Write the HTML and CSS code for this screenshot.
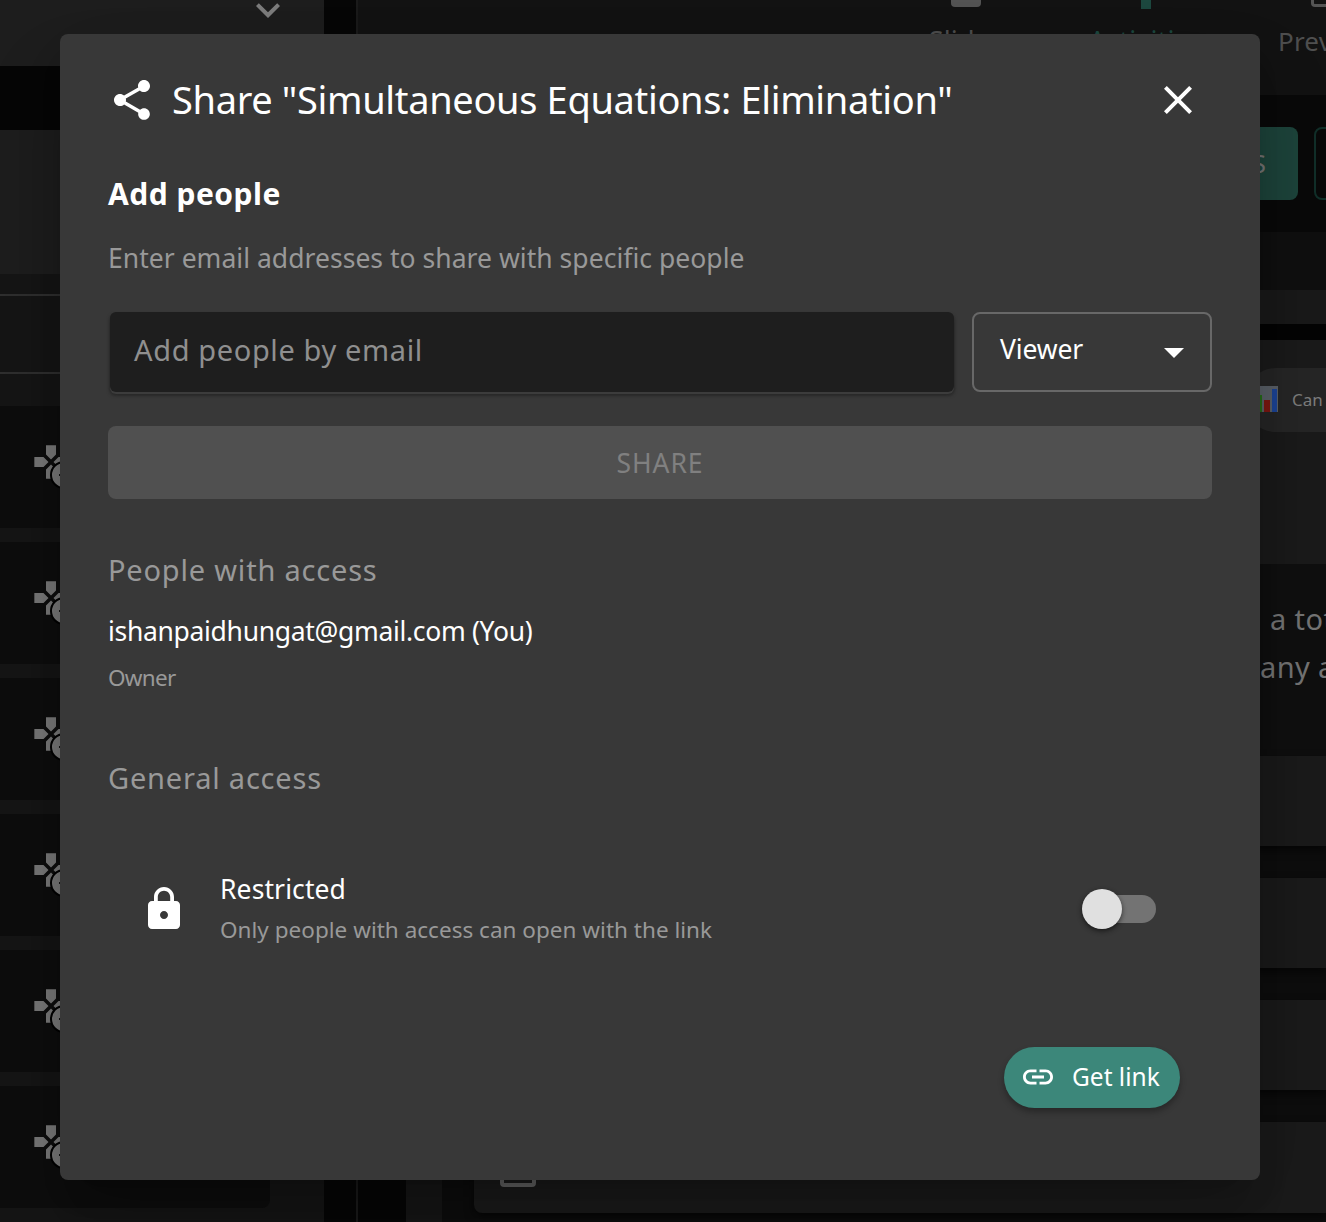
FILE: index.html
```
<!DOCTYPE html>
<html lang="en">
<head>
<meta charset="utf-8">
<title>Share</title>
<link rel="stylesheet" href="styles.css">
</head>
<body>
<svg width="0" height="0" class="defs">
  <symbol id="games" viewBox="0 0 24 24"><path d="M15 7.5V2H9v5.5l3 3 3-3zM7.5 9H2v6h5.5l3-3-3-3zM9 16.5V22h6v-5.5l-3-3-3 3zM16.5 9l-3 3 3 3H22V9h-5.5z"/></symbol>
</svg>
<div class="app">
  <aside class="side">
    <div class="side-head"><svg class="chevron" viewBox="0 0 24 24"><path d="M16.59 8.59 12 13.17 7.41 8.59 6 10l6 6 6-6z"/></svg></div>
    <div class="side-gap"></div>
    <div class="side-block"></div>
    <div class="side-search"></div>
    <div class="side-list">
      <div class="item"><svg class="game"><use href="#games"/></svg><i class="badge"></i></div>
      <div class="item"><svg class="game"><use href="#games"/></svg><i class="badge"></i></div>
      <div class="item"><svg class="game"><use href="#games"/></svg><i class="badge"></i></div>
      <div class="item"><svg class="game"><use href="#games"/></svg><i class="badge"></i></div>
      <div class="item"><svg class="game"><use href="#games"/></svg><i class="badge"></i></div>
      <div class="item"><svg class="game"><use href="#games"/></svg><i class="badge"></i></div>
    </div>
  </aside>
  <main class="main">
    <nav class="tabs">
      <div class="tab"><i class="tab-icon solid"></i><span>Slides</span></div>
      <div class="tab active"><i class="tab-icon stem"></i><span>Activities</span></div>
      <div class="tab preview"><i class="tab-icon frame"></i><span>Preview</span></div>
    </nav>
    <div class="actions"><div class="btn filled">ACTIVITIES</div><div class="btn outlined"></div></div>
    <div class="content">
      <div class="rail"></div>
      <div class="sheet">
        <div class="band band-a"></div>
        <div class="band band-b"></div>
        <div class="band band-c"></div>
        <div class="chips"><div class="chip">
          <svg class="chart" viewBox="0 0 26 26"><path fill="#5d636b" d="M0 0h26v26H0z"/><path fill="#276f18" d="M2 9h8v17H2z"/><path fill="#801813" d="M12 14h6v12h-6z"/><path fill="#1d4699" d="M20 3h5v23h-5z"/></svg>
          <span>Can you</span></div></div>
        <div class="question"><p>a total</p><p class="second">any are</p></div>
        <div class="answers">
          <div class="answer"></div>
          <div class="answer"></div>
          <div class="answer"></div>
          <div class="answer last"><i class="check"></i></div>
        </div>
      </div>
    </div>
  </main>
</div>

<div class="overlay">
  <section class="dialog">
    <header class="title-row">
      <svg class="icon" viewBox="0 0 24 24"><path d="M18 16.08c-.76 0-1.44.3-1.96.77L8.91 12.7c.05-.23.09-.46.09-.7s-.04-.47-.09-.7l7.05-4.11c.54.5 1.25.81 2.04.81 1.66 0 3-1.34 3-3s-1.34-3-3-3-3 1.34-3 3c0 .24.04.47.09.7L8.04 9.81C7.5 9.31 6.79 9 6 9c-1.66 0-3 1.34-3 3s1.34 3 3 3c.79 0 1.5-.31 2.04-.81l7.12 4.16c-.05.21-.08.43-.08.65 0 1.61 1.31 2.92 2.92 2.92s2.92-1.31 2.92-2.92-1.31-2.92-2.92-2.92"/></svg>
      <h1>Share "Simultaneous Equations: Elimination"</h1>
      <svg class="icon close" viewBox="0 0 24 24"><path d="M19 6.41 17.59 5 12 10.59 6.41 5 5 6.41 10.59 12 5 17.59 6.41 19 12 13.41 17.59 19 19 17.59 13.41 12z"/></svg>
    </header>
    <h2>Add people</h2>
    <p class="hint">Enter email addresses to share with specific people</p>
    <div class="invite">
      <div class="field"><span>Add people by email</span></div>
      <div class="select"><span>Viewer</span><svg class="icon" viewBox="0 0 24 24"><path d="m7 10 5 5 5-5z"/></svg></div>
    </div>
    <div class="share"><span>SHARE</span></div>
    <h3 class="people">People with access</h3>
    <p class="email"><span>ishanpaidhungat@gmail.com (You)</span></p>
    <p class="owner"><span>Owner</span></p>
    <h3 class="general">General access</h3>
    <div class="access">
      <svg class="icon" viewBox="0 0 24 24"><path d="M18 8h-1V6c0-2.76-2.24-5-5-5S7 3.24 7 6v2H6c-1.100 0-2 .9-2 2v10c0 1.100.9 2 2 2h12c1.100 0 2-.9 2-2V10c0-1.100-.9-2-2-2m-6 9c-1.100 0-2-.9-2-2s.9-2 2-2 2 .9 2 2-.9 2-2 2m3.100-9H8.900V6c0-1.710 1.390-3.100 3.100-3.100s3.100 1.390 3.100 3.100z"/></svg>
      <div class="access-text"><p class="restricted">Restricted</p><p class="only">Only people with access can open with the link</p></div>
      <div class="switch"><i class="thumb"></i></div>
    </div>
    <div class="foot">
      <div class="get-link"><svg viewBox="0 0 24 24"><path d="M3.900 12c0-1.710 1.390-3.100 3.100-3.100h4V7H7c-2.760 0-5 2.240-5 5s2.240 5 5 5h4v-1.900H7c-1.710 0-3.100-1.390-3.100-3.100M8 13h8v-2H8zm9-6h-4v1.900h4c1.710 0 3.100 1.390 3.100 3.100s-1.390 3.100-3.100 3.100h-4V17h4c2.760 0 5-2.240 5-5s-2.240-5-5-5"/></svg><span>Get link</span></div>
    </div>
  </section>
</div>
</body>
</html>
```
FILE: styles.css
```
* { box-sizing: border-box; margin: 0; padding: 0; }
body { width: 1326px; height: 1222px; overflow: hidden; background: #070707; color: #fff; font-family: "Noto Sans", sans-serif; }
p, h1, h2, h3, span { white-space: nowrap; }
h1, h3 { font-weight: 400; }
svg { fill: currentColor; flex: none; }
.defs { position: absolute; }

/* page behind the dialog */
.app { display: flex; width: 1326px; height: 1222px; overflow: hidden; }
.side { width: 324px; flex: none; background: #161616; }
.side-head { height: 66px; background: #1e1e1e; display: flex; justify-content: flex-end; padding-right: 32px; }
.chevron { width: 48px; height: 48px; margin-top: -14px; color: #808080; }
.side-gap { height: 64px; background: #070707; }
.side-block { height: 144px; background: #1e1e1e; }
.side-search { height: 80px; margin-top: 20px; border: solid #303030; border-width: 2px 0; }
.side-list { display: flex; flex-direction: column; gap: 14px; padding-top: 32px; }
.item { height: 122px; width: 270px; background: #0e0e0e; border-radius: 0 8px 8px 0; position: relative; padding: 36px 0 0 31px; flex: none; }
.game { width: 40px; height: 40px; color: #7c7c7c; }
.badge { position: absolute; left: 50px; top: 55px; width: 28px; height: 28px; border-radius: 50%; border: 2px solid #000; background: radial-gradient(circle at 9px 12px, #000 1.5px, #7c7c7c 2px); }
.main { flex: 1; min-width: 0; margin-left: 32px; border-left: 2px solid #1b1b1b; }
.tabs { height: 95px; background: #131313; display: flex; padding-left: 518px; }
.tab { width: 180px; flex: none; display: flex; flex-direction: column; align-items: center; color: #505050; font-size: 26px; line-height: 34px; }
.tab span { letter-spacing: .2px; }
.tab:not(.preview) span { font-size: 27px; }
.active { color: #1d4a40; }
.tab-icon { height: 7px; width: 30px; margin-bottom: 17px; flex: none; }
.solid { background: #555; border-radius: 0 0 4px 4px; }
.stem { background: #1d4a40; width: 10px; height: 9px; margin-bottom: 15px; }
.frame { border: 3px solid #555; border-top: 0; border-radius: 0 0 4px 4px; }
.actions { height: 137px; background: #0a0a0a; padding: 32px 0 0 720px; display: flex; gap: 16px; }
.btn { height: 73px; border-radius: 8px; font-size: 26px; line-height: 72px; flex: none; }
.filled { width: 220px; padding-right: 32px; text-align: right; background: #1e463d; color: #777; }
.outlined { width: 180px; border: 2px solid #12302a; }
.content { display: flex; height: 990px; }
.rail { width: 36px; margin-left: 48px; background: #171717; }
.sheet { flex: 1; min-width: 0; background: #0e0e0e; }
.band-a { height: 58px; background: #101010; }
.band-b { height: 34px; background: #1a1a1a; }
.band-c { height: 16px; background: #050505; }
.chips { height: 224px; background: #1b1b1b; padding: 28px 0 0 802px; }
.chip { width: 300px; height: 64px; border-radius: 32px; background: #272727; display: flex; align-items: center; gap: 14px; padding: 0 0 2px 8px; color: #808080; font-size: 17px; }
.chart { width: 26px; height: 26px; }
.question { height: 192px; background: #101010; padding: 31px 0 0 828px; color: #777; font-size: 29px; line-height: 48px; letter-spacing: .4px; }
.second { margin-left: -10px; }
.answers { padding-left: 32px; display: flex; flex-direction: column; gap: 32px; }
.answer { height: 90px; background: #1b1b1b; border-radius: 8px 0 0 8px; box-shadow: 0 4px 10px #0008; }
.last { height: 91px; padding: 29px 0 0 26px; }
.check { display: block; width: 36px; height: 36px; border: 4px solid #666; border-radius: 4px; }

/* dialog */
.overlay { position: absolute; left: 0; top: 0; padding: 34px 60px; }
.dialog { width: 1200px; height: 1146px; padding: 0 48px; border-radius: 8px; background: #383838; box-shadow: 0 22px 30px -14px rgba(0,0,0,.2), 0 48px 76px 6px rgba(0,0,0,.14), 0 18px 92px 16px rgba(0,0,0,.12); }
.icon { width: 48px; height: 48px; }
.title-row { height: 133px; padding-bottom: 1px; display: flex; align-items: center; }
h1 { font-size: 38px; line-height: 52px; margin-left: 16px; padding-bottom: 3px; letter-spacing: -.34px; }
.close { margin-left: auto; margin-right: 10px; }
h2 { font-size: 30px; line-height: 53px; letter-spacing: .5px; }
.hint { font-size: 26.5px; line-height: 76px; color: #999; letter-spacing: .03px; }
.invite { display: flex; margin-top: 16px; height: 80px; }
.field { width: 844px; margin: 0 18px 0 2px; border-radius: 6px; background: #1e1e1e; padding-left: 24px; font-size: 29px; line-height: 76px; letter-spacing: .63px; color: #8f8f8f; box-shadow: 0 2px 0 #3c3c3c, 0 3px 3px 1px #282828; }
.select { width: 240px; border: 2px solid #686868; border-radius: 8px; display: flex; align-items: center; justify-content: space-between; padding: 0 12px 0 26px; font-size: 26.5px; letter-spacing: -.15px; }
.select span { padding-bottom: 6px; }
.share { height: 73px; margin-top: 34px; border-radius: 8px; background: #505050; color: #808080; text-align: center; font-size: 26.5px; line-height: 74px; letter-spacing: .9px; }
h3 { font-size: 29px; line-height: 58px; color: #999; letter-spacing: .8px; }
.people { margin-top: 42px; }
.email { font-size: 26.5px; line-height: 64px; letter-spacing: -.32px; }
.owner { font-size: 22.5px; line-height: 30px; color: #999; letter-spacing: -.7px; }
.general { margin-top: 56px; letter-spacing: .8px; }
.access { display: flex; align-items: center; height: 82px; margin-top: 61px; padding: 0 56px 0 32px; }
.access-text { margin-left: 32px; padding-top: 2px; }
.restricted { font-size: 26.5px; line-height: 40px; letter-spacing: .1px; }
.only { font-size: 22.5px; line-height: 42px; color: #999; letter-spacing: .02px; }
.switch { width: 68px; height: 28px; margin-left: auto; border-radius: 14px; background: #737373; position: relative; }
.thumb { position: absolute; left: -6px; top: -6px; width: 40px; height: 40px; border-radius: 50%; background: #e0e0e0; box-shadow: 0 2px 4px rgba(0,0,0,.4), 0 2px 6px rgba(0,0,0,.2); }
.foot { display: flex; justify-content: flex-end; margin-top: 97px; padding-right: 32px; }
.get-link { width: 176px; height: 61px; border-radius: 31px; background: #3c877a; display: flex; align-items: center; padding-left: 16px; font-size: 24.5px; box-shadow: 0 4px 6px rgba(0,0,0,.3); }
.get-link svg { width: 36px; height: 36px; margin-bottom: 1px; }
.get-link span { margin-left: 16px; padding-bottom: 2px; }
```
